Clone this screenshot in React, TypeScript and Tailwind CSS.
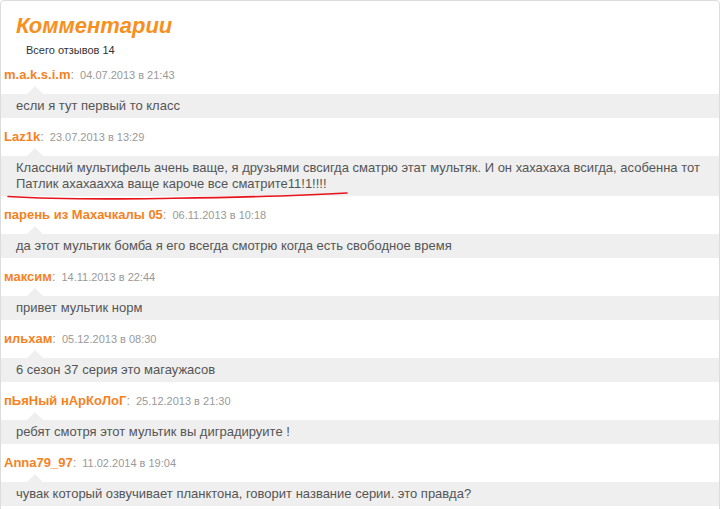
import React from 'react'

interface Comment {
  name: string
  date: string
  text: string
}

const comments: Comment[] = [
  { name: 'm.a.k.s.i.m', date: '04.07.2013 в 21:43', text: 'если я тут первый то класс' },
  {
    name: 'Laz1k',
    date: '23.07.2013 в 13:29',
    text: 'Классний мультифель ачень ваще, я друзьями свсигда сматрю этат мультяк. И он хахахаха всигда, асобенна тот Патлик ахахаахха ваще кароче все сматрите11!1!!!!',
  },
  { name: 'парень из Махачкалы 05', date: '06.11.2013 в 10:18', text: 'да этот мультик бомба я его всегда смотрю когда есть свободное время' },
  { name: 'максим', date: '14.11.2013 в 22:44', text: 'привет мультик норм' },
  { name: 'ильхам', date: '05.12.2013 в 08:30', text: '6 сезон 37 серия это магаужасов' },
  { name: 'пЬяНый нАрКоЛоГ', date: '25.12.2013 в 21:30', text: 'ребят смотря этот мультик вы диградируите !' },
  { name: 'Anna79_97', date: '11.02.2014 в 19:04', text: 'чувак который озвучивает планктона, говорит название серии. это правда?' },
]

const CommentItem = ({ c }: { c: Comment }) => (
  <div>
    <div className="h-[38px] flex items-center pl-[3px]">
      <span className="text-[13px] font-bold text-[#f5821f]">{c.name}</span>
      <span className="text-[13px] text-[#999]">:</span>
      <span className="ml-[6px] text-[11px] text-[#999]">{c.date}</span>
    </div>
    <div className="relative bg-[#efefef] py-[4px] pl-[15px] pr-[12px] text-[13px] leading-[16px] text-[#555]">
      <div className="absolute left-[26px] -top-[8px] w-0 h-0 border-l-[8px] border-r-[8px] border-b-[8px] border-l-transparent border-r-transparent border-b-[#efefef]" />
      {c.text}
    </div>
  </div>
)

export default function App() {
  return (
    <div className="relative w-[724px] h-[509px] bg-white overflow-hidden" style={{ fontFamily: '"Liberation Sans", Arial, sans-serif' }}>
      <div className="w-[720px] h-[520px] border border-[#dcdcdc] rounded-t-[4px] bg-white">
        <div className="h-[55px] pl-[15px] pt-[12px]">
          <div className="text-[22px] leading-[26px] font-bold italic text-[#f7901e]">Комментарии</div>
          <div className="pl-[10px] mt-[5px] text-[11px] leading-[13px] text-[#333]">Всего отзывов 14</div>
        </div>
        {comments.map((c) => (
          <CommentItem key={c.name} c={c} />
        ))}
      </div>
      <svg className="absolute left-0 top-0 pointer-events-none" width="724" height="509">
        <path
          d="M8 196.5 C 40 198.5, 90 199.5, 160 198.5 S 280 197, 347 193"
          fill="none"
          stroke="#e8141b"
          strokeWidth="1.6"
          strokeLinecap="round"
        />
      </svg>
    </div>
  )
}
